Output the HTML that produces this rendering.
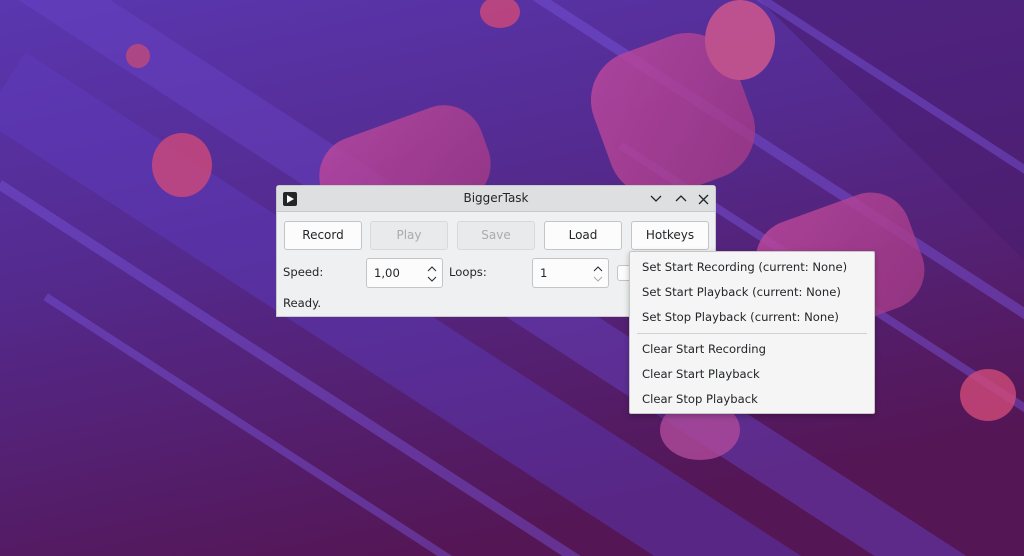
<!DOCTYPE html>
<html><head><meta charset="utf-8"><style>
html,body{margin:0;width:1024px;height:556px;overflow:hidden}
body{font-family:"DejaVu Sans","Liberation Sans",sans-serif;font-size:11.6px;color:#232629;position:relative}
svg.bg{position:absolute;left:0;top:0}
.win{position:absolute;left:276px;top:185px;width:440px;height:132px;background:#eff0f1;border:1px solid #c8c9ca;box-sizing:border-box;border-radius:3px 3px 0 0}
.tb{height:25px;background:#dedfe0;border-bottom:1px solid #c9cacb;position:relative}
.tb .t{position:absolute;left:0;right:0;top:5px;text-align:center;font-size:12px}
.btn{position:absolute;top:35px;height:29px;width:78px;background:#fcfcfc;border:1px solid #c3c4c5;border-radius:3px;box-sizing:border-box;text-align:center;line-height:27px;font-size:12px}
.dis{background:#e9eaeb;color:#a9abad;border-color:#d8d9da}
.lbl{position:absolute;font-size:11.6px}
.spin{position:absolute;top:72px;height:30px;width:77px;background:#fcfcfc;border:1px solid #c3c4c5;border-radius:3px;box-sizing:border-box;padding-left:7px;line-height:28px;font-size:11.6px}
.menu{position:absolute;left:629px;top:251px;width:246px;height:163px;background:#f5f5f6;border:1px solid #c6c7c8;box-sizing:border-box;border-radius:2px;box-shadow:0 2px 6px rgba(0,0,0,.25)}
.mi{position:absolute;left:12px;font-size:11.6px}
</style></head><body>
<svg class="bg" width="1024" height="556">
<defs>
<linearGradient id="g" x1="0" y1="0" x2="0.4" y2="1"><stop offset="0" stop-color="#5a37b0"/><stop offset="0.45" stop-color="#542a8e"/><stop offset="1" stop-color="#541655"/></linearGradient>
<linearGradient id="p" x1="0" y1="0" x2="1" y2="1"><stop offset="0" stop-color="#c04a9e"/><stop offset="1" stop-color="#a23a86"/></linearGradient>
</defs>
<rect width="1024" height="556" fill="url(#g)"/>
<path d="M760 0 L1024 0 L1024 260 Z" fill="#4a1c6e" opacity=".6"/>
<g transform="rotate(33)" opacity=".45">
<rect x="0" y="-60" width="1200" height="50" fill="#6a44c8"/>
<rect x="50" y="30" width="1200" height="80" fill="#5f3cc0"/>
<rect x="100" y="150" width="1100" height="10" fill="#7a55dd"/>
<rect x="300" y="-300" width="1100" height="10" fill="#7a55dd"/>
<rect x="500" y="-420" width="900" height="8" fill="#7a55dd"/>
<rect x="600" y="-220" width="900" height="8" fill="#7a55dd"/>
<rect x="200" y="220" width="700" height="8" fill="#7a55dd"/>
</g>
<g fill="url(#p)" opacity=".8">
<rect x="598" y="40" width="150" height="150" rx="50" transform="rotate(-20 673 115)"/>
<ellipse cx="740" cy="40" rx="35" ry="40" fill="#d85a8c"/>
<rect x="320" y="120" width="170" height="100" rx="40" transform="rotate(-20 405 170)"/>
<rect x="760" y="205" width="160" height="120" rx="40" transform="rotate(-20 840 265)"/>
<ellipse cx="182" cy="165" rx="30" ry="32" fill="#d04a7a"/>
<ellipse cx="500" cy="12" rx="20" ry="16" fill="#d04a7a"/>
<ellipse cx="138" cy="56" rx="12" ry="12" fill="#c04a7a"/>
<ellipse cx="988" cy="395" rx="28" ry="26" fill="#d04a7a"/>
<ellipse cx="700" cy="430" rx="40" ry="30" fill="#b04a9a"/>
</g>
</svg>
<div class="win">
<div class="tb">
<svg style="position:absolute;left:6px;top:6px" width="14" height="14"><rect width="14" height="14" rx="2" fill="#232629"/><path d="M4 3 L11 7 L4 11Z" fill="#fff"/></svg>
<div class="t">BiggerTask</div>
<svg style="position:absolute;left:372px;top:7px" width="60" height="12" fill="none" stroke="#232629" stroke-width="1.3"><path d="M2 3 L7 8 L12 3"/><path d="M27 8 L32 3 L37 8"/><path d="M50 2 L59 11 M59 2 L50 11"/></svg>
</div>
<div class="btn" style="left:7px">Record</div>
<div class="btn dis" style="left:93px">Play</div>
<div class="btn dis" style="left:180px">Save</div>
<div class="btn" style="left:267px">Load</div>
<div class="btn" style="left:354px">Hotkeys</div>
<div class="lbl" style="left:6px;top:79px">Speed:</div>
<div class="spin" style="left:89px">1,00<svg style="position:absolute;right:4px;top:6px" width="12" height="18" fill="none" stroke="#232629" stroke-width="1"><path d="M2 6 L6 2 L10 6"/><path d="M2 12 L6 16 L10 12"/></svg></div>
<div class="lbl" style="left:172px;top:79px">Loops:</div>
<div class="spin" style="left:255px">1<svg style="position:absolute;right:4px;top:6px" width="12" height="18" fill="none" stroke-width="1"><path d="M2 6 L6 2 L10 6" stroke="#232629"/><path d="M2 12 L6 16 L10 12" stroke="#aaa"/></svg></div>
<div style="position:absolute;left:340px;top:79px;width:14px;height:14px;border:1px solid #c3c4c5;border-radius:3px;background:#fcfcfc"></div>
<div class="lbl" style="left:6px;top:110px">Ready.</div>
</div>
<div class="menu">
<div class="mi" style="top:8px">Set Start Recording (current: None)</div>
<div class="mi" style="top:33px">Set Start Playback (current: None)</div>
<div class="mi" style="top:58px">Set Stop Playback (current: None)</div>
<div style="position:absolute;left:7px;right:7px;top:81px;height:1px;background:#d0d1d2"></div>
<div class="mi" style="top:90px">Clear Start Recording</div>
<div class="mi" style="top:115px">Clear Start Playback</div>
<div class="mi" style="top:140px">Clear Stop Playback</div>
</div>
</body></html>
